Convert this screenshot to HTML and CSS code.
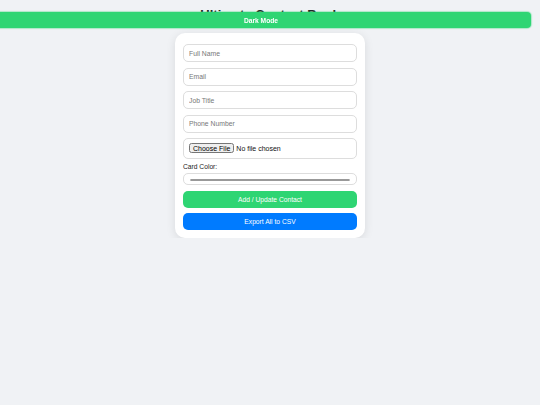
FILE: index.html
```html
<!DOCTYPE html>
<html>
<head>
<meta charset="utf-8">
<link rel="stylesheet" href="styles.css">
</head>
<body>
<button class="mode-toggle">Dark Mode</button>
<h1 class="title">Ultimate Contact Book</h1>
<div class="card">
  <form class="form">
    <input class="field" type="text" placeholder="Full Name">
    <input class="field" type="email" placeholder="Email">
    <input class="field" type="text" placeholder="Job Title">
    <input class="field" type="tel" placeholder="Phone Number">
    <input class="field file" type="file">
    <label class="label">Card Color:</label>
    <input class="field color" type="color" value="#c8c8c8">
    <button type="button" class="btn btn-add">Add / Update Contact</button>
    <button type="button" class="btn btn-export">Export All to CSV</button>
  </form>
</div>
</body>
</html>
```

FILE: styles.css
```css
html, body {
  margin: 0;
  padding: 0;
}
body {
  background: #f0f2f5;
  font-family: "Liberation Sans", Arial, sans-serif;
  color: #222;
}
.mode-toggle {
  position: fixed;
  top: 12px;
  right: 9px;
  width: 100%;
  height: 16px;
  margin: 0;
  padding: 0;
  border: none;
  border-radius: 4px;
  background: #2ed573;
  color: #fff;
  font-family: "Liberation Sans", Arial, sans-serif;
  font-size: 6.7px;
  font-weight: bold;
  box-shadow: 0 0 1px 1px rgba(46, 213, 115, 0.35);
}
.title {
  margin: 0;
  padding-top: 7px;
  height: 26px;
  box-sizing: border-box;
  text-align: center;
  font-size: 13px;
  font-weight: bold;
  color: #222;
}
.card {
  width: 190px;
  margin: 7px auto 0;
  background: #fff;
  border-radius: 10px;
  box-shadow: 0 2px 10px rgba(0, 0, 0, 0.1);
  padding: 11px 8px 8px;
  box-sizing: border-box;
}
.form {
  display: flex;
  flex-direction: column;
}
.field {
  display: block;
  box-sizing: border-box;
  width: 100%;
  height: 18px;
  margin: 0 0 5.5px;
  padding: 0 5px;
  border: 1px solid #ddd;
  border-radius: 5px;
  background: #fff;
  font-family: "Liberation Sans", Arial, sans-serif;
  font-size: 6.8px;
  color: #333;
}
.field::placeholder {
  color: #777;
}
.file {
  height: 21px;
  padding: 0 5px;
  margin-bottom: 2.5px;
  line-height: 19px;
  font-size: 7px;
  color: #111;
}
.file::file-selector-button {
  font-family: "Liberation Sans", Arial, sans-serif;
  font-size: 7px;
  margin-right: 2px;
  padding: 0 2px;
  height: 10px;
}
.label {
  font-size: 6.7px;
  color: #222;
  height: 10px;
  line-height: 10px;
  margin-bottom: 1px;
}
.color {
  height: 12px;
  padding: 2px 6px;
  margin-bottom: 6.5px;
}
.color::-webkit-color-swatch-wrapper {
  padding: 3px 0;
}
.color::-webkit-color-swatch {
  border: 1px solid #999;
  border-radius: 1px;
}
.btn {
  display: block;
  width: 100%;
  height: 17px;
  margin: 0 0 5px;
  border: none;
  border-radius: 5px;
  color: #fff;
  font-family: "Liberation Sans", Arial, sans-serif;
  font-size: 6.7px;
}
.btn-add {
  background: #2ed573;
}
.btn-export {
  background: #007bff;
  margin-bottom: 0;
}
```
